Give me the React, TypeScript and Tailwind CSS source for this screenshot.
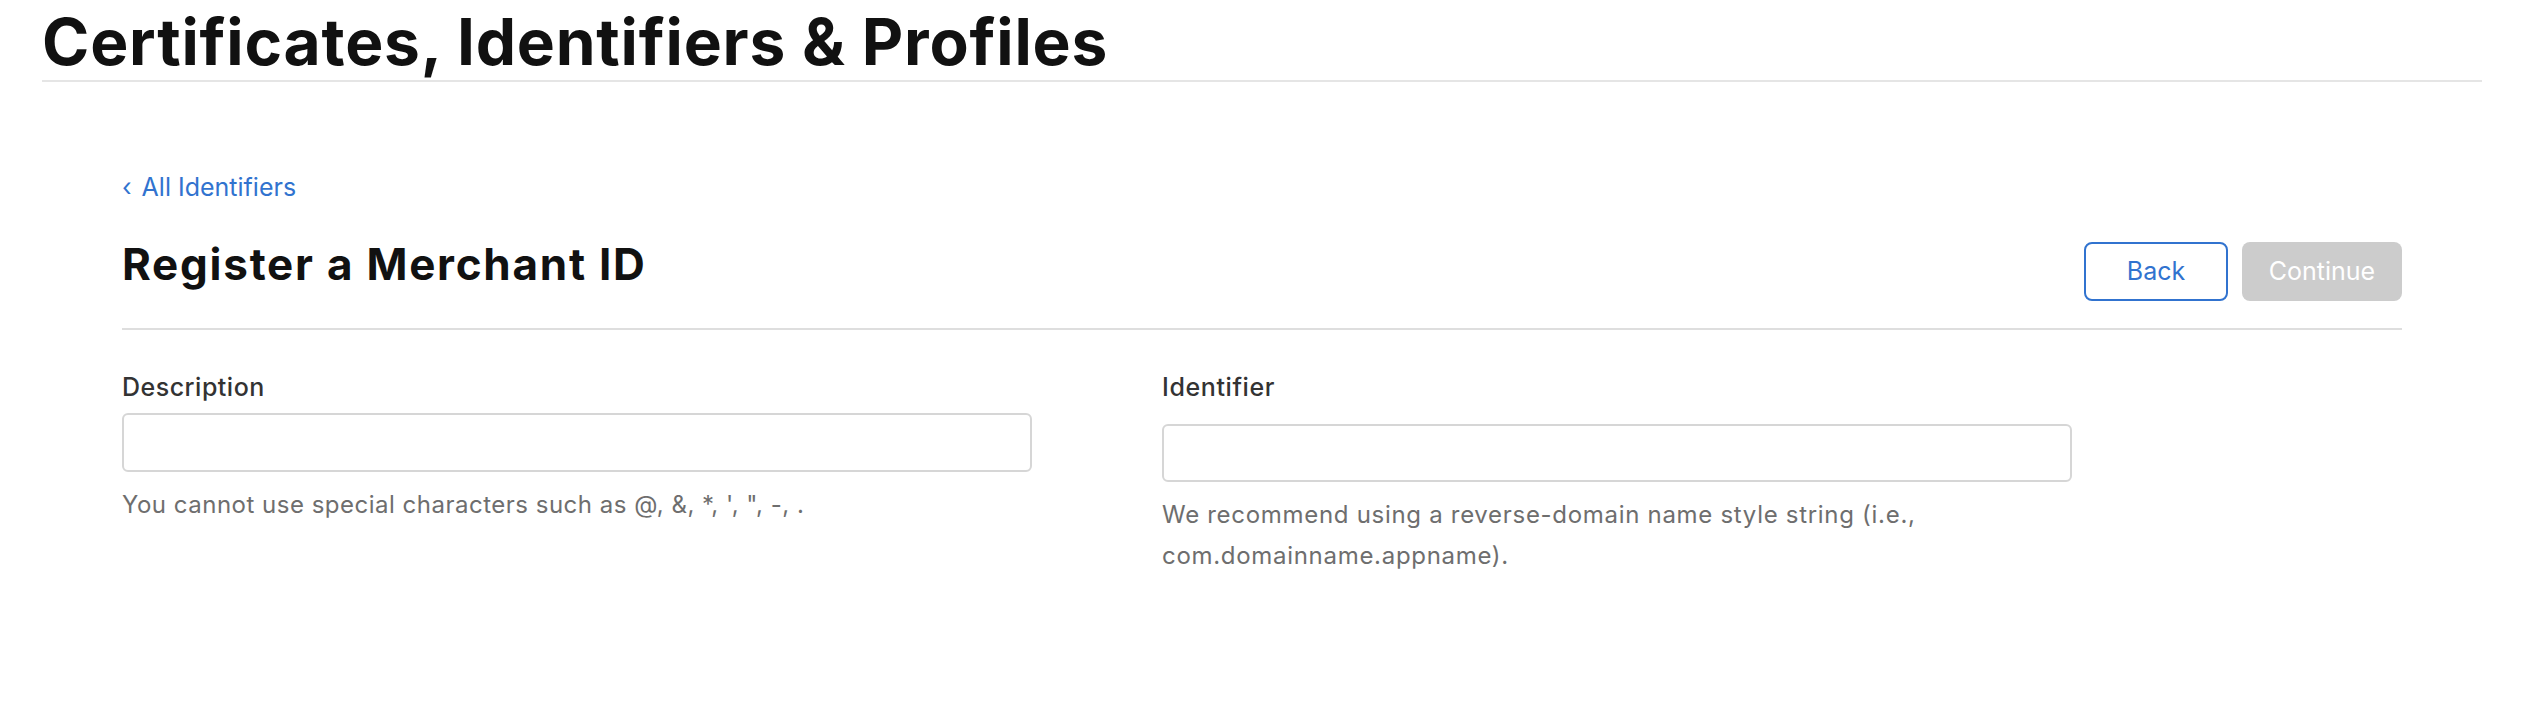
import React from "react";

export default function App() {
  return (
    <div className="w-[2544px] h-[714px] bg-white font-['Inter',sans-serif] overflow-hidden">
      <div className="ml-[42px] w-[2440px] border-b-2 border-[#e5e5e5] pt-[10px] pb-[6px]">
        <h1 className="text-[64px] leading-[64px] font-bold text-[#111111] tracking-[0.8px]">
          Certificates, Identifiers &amp; Profiles
        </h1>
      </div>
      <div className="ml-[122px] w-[2280px]">
        <a className="mt-[90px] flex items-center gap-[10px] text-[25px] leading-[30px] text-[#3173cf]">
          <span className="text-[25px]">‹</span>
          <span>All Identifiers</span>
        </a>
        <div className="mt-[36px] flex items-start justify-between border-b-2 border-[#dedede] pb-[27px]">
          <h2 className="text-[44px] leading-[52px] font-bold text-[#111111] tracking-[1.75px]">Register a Merchant ID</h2>
          <div className="mt-[4px] flex gap-[14px]">
            <button className="h-[59px] w-[144px] rounded-[8px] border-2 border-[#3173cf] text-[25px] text-[#3173cf] bg-white">
              Back
            </button>
            <button className="h-[59px] w-[160px] rounded-[8px] bg-[#cccccc] text-[25px] text-white">
              Continue
            </button>
          </div>
        </div>
        <div className="grid grid-cols-[910px_910px] gap-x-[130px] pt-[42px]">
          <div>
            <div className="text-[25px] leading-[30px] font-medium text-[#333333] tracking-[0.5px]">Description</div>
            <div className="mt-[11px] h-[59px] w-[910px] rounded-[6px] border-2 border-[#d6d6d6] bg-white"></div>
            <div className="mt-[13px] text-[24px] leading-[40px] text-[#6e6e6e] tracking-[0.5px]">
              You cannot use special characters such as @, &amp;, *, ', ", -, .
            </div>
          </div>
          <div>
            <div className="text-[25px] leading-[30px] font-medium text-[#333333] tracking-[0.6px]">Identifier</div>
            <div className="mt-[22px] h-[58px] w-[910px] rounded-[6px] border-2 border-[#d6d6d6] bg-white"></div>
            <div className="mt-[12px] text-[24px] leading-[41px] text-[#6e6e6e] tracking-[0.7px] whitespace-nowrap">
              We recommend using a reverse-domain name style string (i.e.,
              <br />
              com.domainname.appname).
            </div>
          </div>
        </div>
      </div>
    </div>
  );
}
